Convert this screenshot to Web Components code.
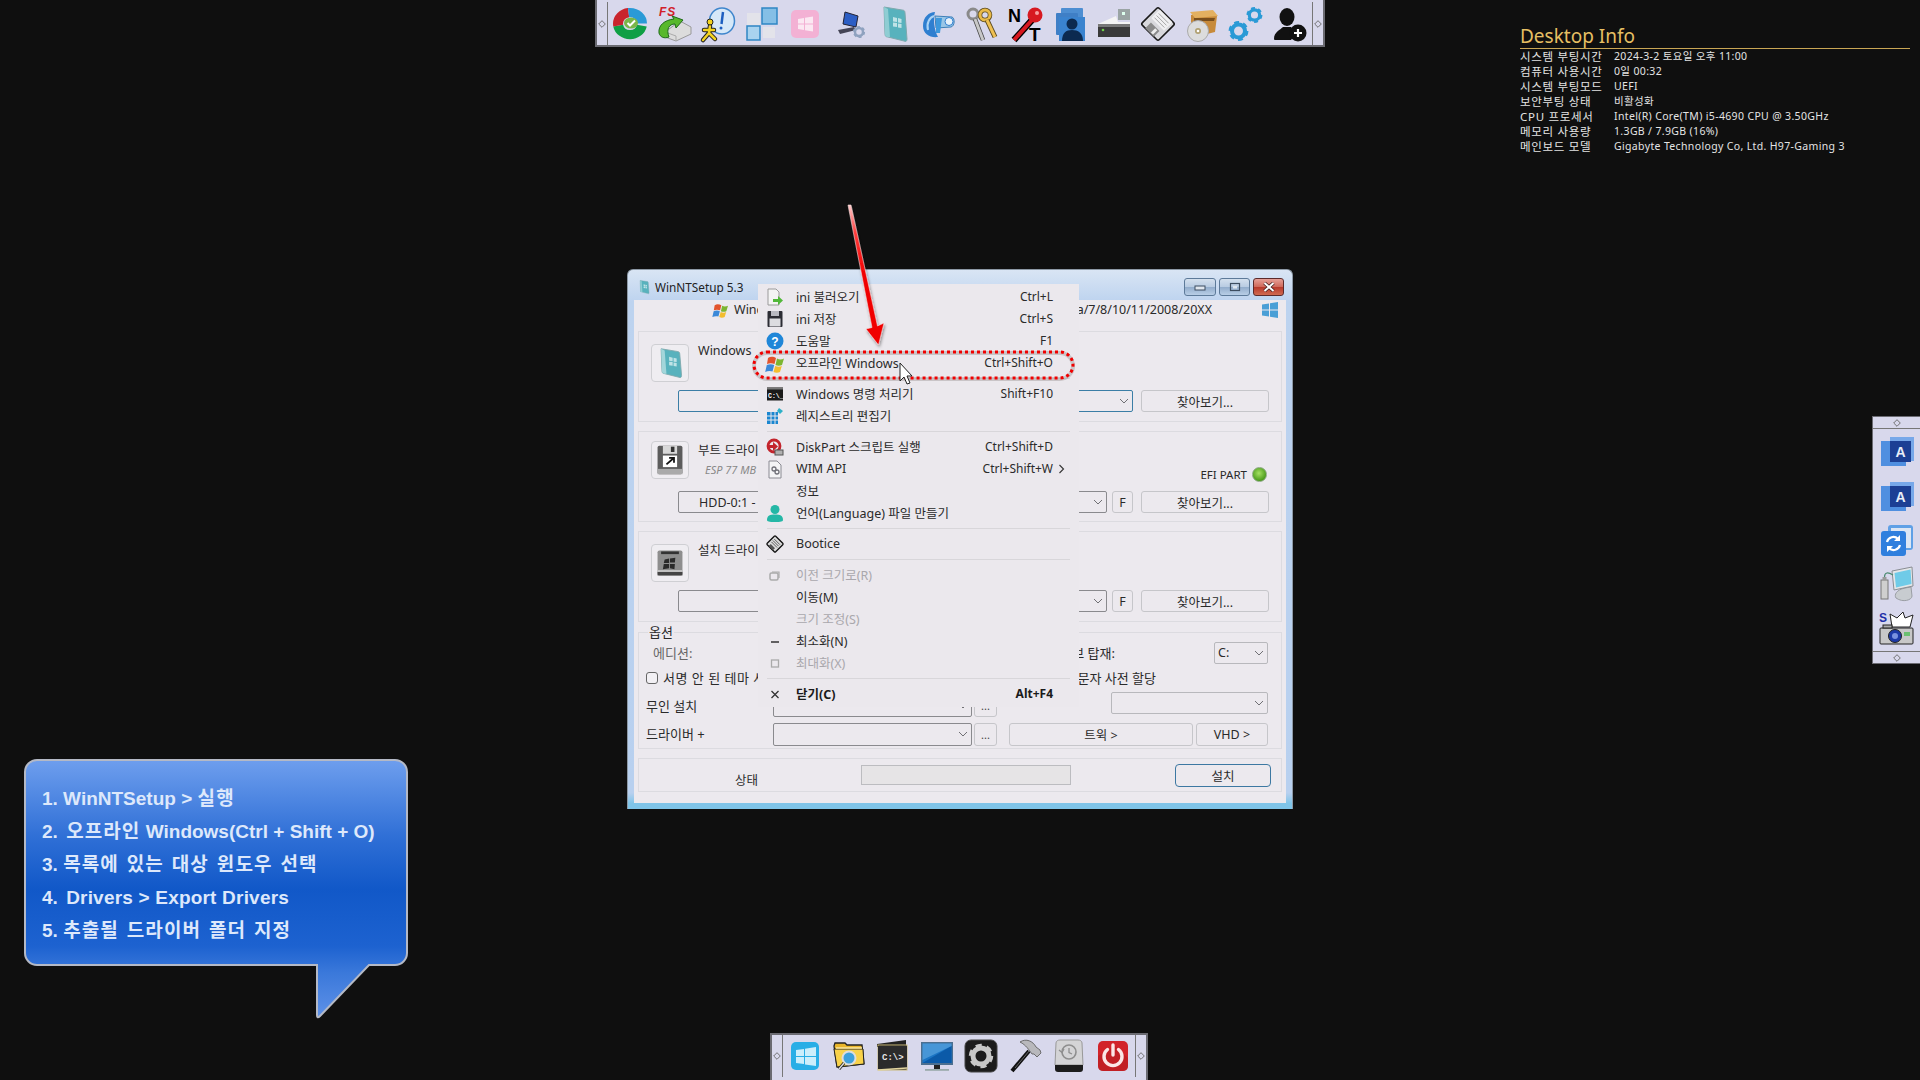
<!DOCTYPE html>
<html lang="ko">
<head>
<meta charset="utf-8">
<title>WinNTSetup</title>
<style>
  html, body { margin: 0; padding: 0; background: #0f0f0f; }
  body { width: 1920px; height: 1080px; position: relative; overflow: hidden; font-family: "Noto Sans", "Noto Sans CJK KR", sans-serif; color: #222; }
  #topDock { left: 595px; top: 0; }
  #bottomDock { left: 770px; top: 1033px; }
  #sideDock { left: 1872px; top: 416px; }
  #info { left: 1520px; top: 23px; }
  #note { left: 22px; top: 757px; }
  #setup { left: 627px; top: 269px; }
  .ko { letter-spacing: 1.1px; word-spacing: 1.500px; }
  .gap { margin-left: 3px; }
</style>
</head>
<body>
<dock-bar id="topDock" cell="44">
  <app-icon name="partition"></app-icon><app-icon name="fs"></app-icon><app-icon name="aim"></app-icon><app-icon name="squares"></app-icon>
  <app-icon name="pinkwin"></app-icon><app-icon name="netpc"></app-icon><app-icon name="book"></app-icon><app-icon name="tube"></app-icon>
  <app-icon name="keys"></app-icon><app-icon name="ntkey"></app-icon><app-icon name="people"></app-icon><app-icon name="drive"></app-icon>
  <app-icon name="floppy"></app-icon><app-icon name="box"></app-icon><app-icon name="gears"></app-icon><app-icon name="useradd"></app-icon>
</dock-bar>

<desktop-info id="info"></desktop-info>

<setup-window id="setup">
  <drive-group icon="bookbox" label="Windows" focus></drive-group>
  <drive-group icon="bootdisk" label="부트 드라이브" sub="ESP 77 MB" combo="HDD-0:1 -" efi fbtn style="--top:9px;--head:50px;--txt:3px"></drive-group>
  <drive-group icon="windisk" label="설치 드라이브" fbtn></drive-group>
  <options-group></options-group>
  <status-group></status-group>
  <ctx-menu slot="menu">
    <menu-item icon="m-open" label="ini 불러오기" keys="Ctrl+L"></menu-item>
    <menu-item icon="m-save" label="ini 저장" keys="Ctrl+S"></menu-item>
    <menu-item icon="m-help" label="도움말" keys="F1"></menu-item>
    <menu-item icon="m-flag" label="오프라인 Windows" keys="Ctrl+Shift+O"></menu-item>
    <menu-sep></menu-sep>
    <menu-item icon="m-cmd" label="Windows 명령 처리기" keys="Shift+F10"></menu-item>
    <menu-item icon="m-reg" label="레지스트리 편집기"></menu-item>
    <menu-sep></menu-sep>
    <menu-item icon="m-disk" label="DiskPart 스크립트 실행" keys="Ctrl+Shift+D"></menu-item>
    <menu-item icon="m-wim" label="WIM API" keys="Ctrl+Shift+W" more></menu-item>
    <menu-item label="정보"></menu-item>
    <menu-item icon="m-user" label="언어(Language) 파일 만들기"></menu-item>
    <menu-sep></menu-sep>
    <menu-item icon="m-boot" label="Bootice"></menu-item>
    <menu-sep></menu-sep>
    <menu-item icon="m-restore" label="이전 크기로(R)" disabled></menu-item>
    <menu-item label="이동(M)"></menu-item>
    <menu-item label="크기 조정(S)" disabled></menu-item>
    <menu-item icon="m-min" label="최소화(N)"></menu-item>
    <menu-item icon="m-max" label="최대화(X)" disabled></menu-item>
    <menu-sep></menu-sep>
    <menu-item icon="m-close" label="닫기(C)" keys="Alt+F4" bold></menu-item>
  </ctx-menu>
</setup-window>

<mark-up></mark-up>

<side-dock id="sideDock">
  <app-icon name="acro1"></app-icon><app-icon name="acro2"></app-icon><app-icon name="sync"></app-icon><app-icon name="usbpc"></app-icon><app-icon name="snap"></app-icon>
</side-dock>

<note-bubble id="note">
  <div>1. WinNTSetup &gt; <span class="ko">실행</span></div>
  <div>2. <span class="ko gap">오프라인</span> Windows(Ctrl + Shift + O)</div>
  <div>3. <span class="ko">목록에 있는 대상 윈도우 선택</span></div>
  <div>4. <span class="gap" style="letter-spacing:.2px">Drivers &gt; Export Drivers</span></div>
  <div>5. <span class="ko">추출될 드라이버 폴더 지정</span></div>
</note-bubble>

<dock-bar id="bottomDock" cell="44">
  <app-icon name="wintile"></app-icon><app-icon name="folder"></app-icon><app-icon name="console"></app-icon><app-icon name="monitor"></app-icon>
  <app-icon name="gearbox"></app-icon><app-icon name="hammer"></app-icon><app-icon name="timedrive"></app-icon><app-icon name="power"></app-icon>
</dock-bar>

<script>
const gear = (x, y, r, c) => `<circle cx="${x}" cy="${y}" r="${r}" fill="none" stroke="${c}" stroke-width="${r * 0.62}"/><circle cx="${x}" cy="${y}" r="${r * 1.32}" fill="none" stroke="${c}" stroke-width="${r * 0.42}" stroke-dasharray="${r * 0.75} ${r * 0.63}"/>`;
const winPanes = 'M8 11 16 10V17H8ZM17 9.8 28 8V17H17ZM8 18H16V25L8 24ZM17 18H28V27L17 25.5Z';
const xpFlag = `<path d="M2 4C5 2 8 3 10 4L8.500 10C6 9 3.500 9 1 10Z" fill="#e2542c"/><path d="M11 4.500C13.500 6 16 5.500 18 4.500L16 11C14 12 11.500 12 9.500 11Z" fill="#7cb531"/><path d="M.8 11C3.500 10 6 10 8.200 11L6.500 17.500C4 16.500 1.500 17 -.8 18Z" fill="#3b89d8"/><path d="M9.200 12C11.500 13 14 13 15.800 12L14 18C12 19 9.500 19 7.500 18Z" fill="#f3bd2e"/>`;

const ICONS = {
  partition: `<g transform="translate(0 1) scale(1 .92)" fill="none" stroke-width="10"><circle cx="18" cy="18" r="12" pathLength="100" stroke="#0f9f45" stroke-dasharray="44 100" stroke-dashoffset="-3"/><circle cx="18" cy="18" r="12" pathLength="100" stroke="#c9242d" stroke-dasharray="26 100" stroke-dashoffset="-47"/><circle cx="18" cy="18" r="12" pathLength="100" stroke="#2a9ad6" stroke-dasharray="30 100" stroke-dashoffset="-73"/></g><ellipse cx="19" cy="17" rx="7" ry="5.500" fill="#7ab648"/><path d="M15.500 17 18 19.500 23 14.500" fill="none" stroke="#fff" stroke-width="2"/>`,
  fs: `<text x="3" y="10" font-family="Liberation Sans" font-weight="700" font-style="italic" font-size="12" fill="#d2202a" letter-spacing="1">FS</text><path d="M9 26 24 15 35 21V28L20 35 9 31Z" fill="#dcdcdc" stroke="#999"/><path d="M9 26 20 30V35" fill="none" stroke="#aaa"/><path d="M3 27C2 19 9 14 18 13L16 10 27 14 20 22 19 18C13 18 10 23 13 31 8 33 4 31 3 27Z" fill="#58b82c" stroke="#1d6a18"/>`,
  aim: `<ellipse cx="22" cy="15" rx="12.500" ry="13" fill="#d6e8f8" stroke="#3f86cc" stroke-width="1.500"/><path d="M23 6 21.500 18" stroke="#1d5fc0" stroke-width="2.500"/><circle cx="21" cy="22" r="1.500" fill="#1d5fc0"/><g fill="none" stroke="#222" stroke-width="4.500" stroke-linecap="round"><path d="M10 20 9 27 3 34M9 27 15 33M4 24 14 24"/></g><g fill="none" stroke="#f3d320" stroke-width="2.500" stroke-linecap="round"><path d="M10 20 9 27 3 34M9 27 15 33M4 24 14 24"/></g><circle cx="10" cy="16" r="3" fill="#f3d320" stroke="#222"/>`,
  squares: `<rect x="3" y="7" width="13" height="12" fill="#e3e3ea"/><rect x="18" y="2" width="15" height="16" fill="#85bfe6" stroke="#2f86c4" stroke-width="1.500"/><rect x="3" y="20" width="13" height="14" fill="#a9d3ef" stroke="#2f86c4" stroke-width="1.500"/><rect x="19" y="21" width="12" height="11" fill="#e3e3ea"/>`,
  pinkwin: `<rect x="3" y="4" width="28" height="28" rx="5" fill="#f3b1d4"/><path d="M10 13 16 12V17.500H10ZM17 11.800 25 10.500V17.500H17ZM10 18.500H16V24L10 23ZM17 18.500H25V25.500L17 24.200Z" fill="#fbe8f2"/>`,
  netpc: `<path d="M13 6 26 10 24 21 11 18Z" fill="#2c5ec4" stroke="#223"/><path d="M6 24 22 21 24 24 8 28Z" fill="#445"/>${gear(27, 26, 4, '#8fa2bf')}`,
  book: `<path d="M8 1 26 4C28 4 29 5 29 7L31 33C31 35 30 36 28 35L12 31C10 31 9 30 9 28Z" fill="#58b2bd" stroke="#7fa9ad"/><path d="M8 1 12 3 14 31 12 31C10 31 9 30 9 28Z" fill="#8fcdd3"/><path d="M17 11 21 12V16L17 15.500ZM22 12 25.500 13V17L22 16.500ZM17 16.500 21 17V21L17 20.500ZM22 17.500 25.500 18V22L22 21.500Z" fill="#bfe3e6"/>`,
  tube: `<path d="M3 20C3 11 9 6 15 6 13 12 14 24 18 31 10 32 3 28 3 20Z" fill="#2f7fd0"/><path d="M8 24C6 17 10 11 14 10" stroke="#aad4f5" stroke-width="2" fill="none"/><path d="M15 10 32 11C35 12 35 20 31 21L16 22Z" fill="#9ac6e6" stroke="#3f80b8"/><ellipse cx="29" cy="15.500" rx="4" ry="4" fill="#e8f2fa" stroke="#2f7fd0"/><path d="M16 12 22 12 20 27 16 27Z" fill="#3d98dc"/>`,
  keys: `<g fill="none"><circle cx="9" cy="8" r="5" stroke="#8a8a8a" stroke-width="3"/><path d="M11 13 19 34" stroke="#444" stroke-width="4.500"/><path d="M11 13 19 34" stroke="#c8c8c8" stroke-width="3"/><circle cx="21" cy="9" r="5" stroke="#5a4a20" stroke-width="4.500"/><circle cx="21" cy="9" r="5" stroke="#e8b948" stroke-width="3"/><path d="M23 14 31 31" stroke="#5a4a20" stroke-width="5"/><path d="M23 14 31 31" stroke="#efc052" stroke-width="3"/></g>`,
  ntkey: `<text x="0" y="16" font-family="Liberation Sans" font-weight="700" font-size="18" fill="#000">N</text><text x="21" y="35" font-family="Liberation Sans" font-weight="700" font-size="19" fill="#000">T</text><path d="M24 14 6 34" stroke="#000" stroke-width="6.500"/><path d="M24 14 6 34" stroke="#d71920" stroke-width="4"/><circle cx="27" cy="9" r="7.500" fill="#d71920"/><circle cx="29" cy="7" r="2" fill="#f6a0a0"/>`,
  people: `<rect x="9" y="2" width="22" height="22" rx="1" fill="#4d8ed2"/><rect x="4" y="7" width="22" height="22" rx="1" fill="#3f7fc6"/><rect x="7" y="11" width="26" height="24" fill="#3a83cf"/><circle cx="20" cy="18" r="5.500" fill="#0c2a50"/><path d="M10 35C10 27 14 24 20 24S31 27 31 35Z" fill="#0c2a50"/>`,
  drive: `<rect x="22" y="3" width="12" height="11" fill="#9aa4a4"/><rect x="26" y="6" width="3" height="3" fill="#dfe"/><path d="M2 18 20 10 22 16 34 16V18Z" fill="#f4f4f4"/><rect x="2" y="18" width="32" height="13" fill="#3a3a3a"/><rect x="2" y="18" width="32" height="3" fill="#787878"/><circle cx="7" cy="24" r="1.300" fill="#6fd04a"/>`,
  floppy: `<g transform="rotate(45 18 18)"><rect x="6" y="6" width="24" height="24" rx="2" fill="#d8d8dc" stroke="#1a1a1a" stroke-width="1.600"/><rect x="9" y="6.500" width="18" height="12" fill="#f0f0f2"/><path d="M11 10H25M11 13H25M11 16H25" stroke="#999" stroke-width=".8"/><rect x="12" y="22" width="12" height="8" fill="#8a8a8a"/><rect x="19" y="23" width="3" height="6" fill="#eee"/></g>`,
  box: `<path d="M7 9 27 5 33 10 31 26 15 30 7 24Z" fill="#c78a3a"/><path d="M6 6 29 4 34 10 11 12Z" fill="#e3b060"/><path d="M10 12H31L30 15H10Z" fill="#7a4f1c"/><circle cx="14" cy="25" r="10.500" fill="#dcdcdc" stroke="#aaa"/><circle cx="14" cy="25" r="3" fill="#b0a070"/><circle cx="14" cy="25" r="1.300" fill="#fff"/>`,
  gears: gear(10.500, 25, 6.500, '#2a9ad6') + gear(26.500, 9, 5.200, '#2a9ad6'),
  useradd: `<ellipse cx="15" cy="11" rx="7.500" ry="9" fill="#111"/><path d="M2 33C2 26 8 24 11 21H19C21 24 24 25 25 26L19 34H4C3 34 2 34 2 33Z" fill="#111"/><circle cx="26" cy="27" r="8.500" fill="#111"/><path d="M22 27H30M26 23V31" stroke="#fff" stroke-width="2.200"/>`,
  wintile: `<rect x="4" y="4" width="28" height="28" rx="5" fill="#29aee6"/><path d="${winPanes}" fill="#cdeefb" transform="translate(1 1)"/>`,
  folder: `<path d="M3 8 4 5H14L16 7H31L33 26 6 29Z" fill="#e9b52a" stroke="#222" stroke-width="1.300"/><path d="M3 11H32L33 26 6 29Z" fill="#f8d24a" stroke="#222"/><path d="M5 10H31" stroke="#fbe9a0" stroke-width="1.500"/><circle cx="18" cy="20" r="6.500" fill="#3da0dc" stroke="#ddd" stroke-width="2"/><path d="M13 25 8 31" stroke="#222" stroke-width="3"/><path d="M13 25 8 31" stroke="#ddd" stroke-width="1.400"/>`,
  console: `<path d="M2 6 31 2V7L2 9Z" fill="#222"/><rect x="3" y="7" width="29" height="25" fill="#1a1a1a" stroke="#c8b878" stroke-width="1"/><rect x="3" y="8" width="29" height="23" fill="#2b2b2b"/><text x="7" y="22" font-family="Liberation Mono" font-size="9" fill="#e8e8e8" font-weight="700">C:\\&gt;</text><path d="M3 32 32 30" stroke="#e3d6a0" stroke-width="1.500"/>`,
  monitor: `<rect x="2" y="4" width="32" height="23" fill="#4c6f90"/><path d="M3.500 5.500H32.500V25H3.500Z" fill="#1a74c4"/><path d="M3.500 25 32.500 8V25Z" fill="#0b5aa8"/><path d="M3.500 5.500H32.500V8L3.500 22Z" fill="#6db2e8" opacity=".55"/><rect x="15" y="27" width="6" height="4" fill="#222"/><rect x="6" y="31" width="24" height="1.800" fill="#9aa"/>`,
  gearbox: `<rect x="2" y="2" width="32" height="32" rx="6" fill="#1c1c1c" stroke="#444"/>${gear(18, 18, 8, '#c8c8c8')}`,
  hammer: `<path d="M22 13 5 33" stroke="#111" stroke-width="4"/><path d="M22 13 8 30" stroke="#666" stroke-width="1"/><path d="M13 4C19 0 26 3 29 9L33 12 34 15 30 19 27 16 25 16C22 12 19 7 13 4Z" fill="#b8b8bc" stroke="#555" stroke-width=".8"/>`,
  timedrive: `<path d="M5 5C5 3 7 2 9 2H27C29 2 31 3 31 5L32 27H4Z" fill="#d4d4d6" stroke="#999"/><circle cx="18" cy="14" r="7" fill="none" stroke="#8e8e8e" stroke-width="1.600"/><path d="M18 10V14.500L21 16M8 12 11 14.500 13 11" fill="none" stroke="#8e8e8e" stroke-width="1.300"/><path d="M4 27H32V31C32 33 31 34 29 34H7C5 34 4 33 4 31Z" fill="#1c1c1c"/>`,
  power: `<rect x="3" y="3" width="30" height="30" rx="5" fill="#d2232a"/><path d="M3 18V28C3 31 5 33 8 33H28C31 33 33 31 33 28V20L20 8Z" fill="#b71c22" opacity=".6"/><path d="M12.500 11.500A9 9 0 1 0 23.500 11.500" fill="none" stroke="#fbe6e6" stroke-width="3.400" stroke-linecap="round"/><path d="M18 7V17" stroke="#fbe6e6" stroke-width="3.400" stroke-linecap="round"/>`,
  acro1: `<rect x="2" y="7" width="25" height="25" fill="#4f8fe0"/><rect x="11" y="3" width="24" height="24" fill="#5f9ce8" opacity=".8"/><rect x="11" y="7" width="21" height="21" fill="#1c3f94"/><text x="21.500" y="23" text-anchor="middle" font-family="Liberation Sans" font-weight="700" font-size="14" fill="#e8eef8">A</text>`,
  acro2: `<rect x="2" y="8" width="25" height="25" fill="#4f8fe0"/><rect x="11" y="4" width="24" height="24" fill="#5f9ce8" opacity=".8"/><rect x="11" y="8" width="21" height="21" fill="#1c3f94"/><text x="21.500" y="24" text-anchor="middle" font-family="Liberation Sans" font-weight="700" font-size="14" fill="#e8eef8">A</text>`,
  sync: `<rect x="9" y="3" width="25" height="25" rx="3" fill="#5fa0e6"/><rect x="12" y="6" width="20" height="20" fill="#dce6f4"/><rect x="2" y="9" width="25" height="25" rx="3" fill="#2f7fde"/><path d="M8 20A6.500 6.500 0 0 1 19 17M21 23A6.500 6.500 0 0 1 10 26" fill="none" stroke="#fff" stroke-width="2.200"/><path d="M21 13V19H15ZM8 30V24H14Z" fill="#fff"/>`,
  usbpc: `<path d="M26 22C17 24 15 29 17 32 24 37 33 34 33 30L32 21Z" fill="#c8ccd0" stroke="#9a9ea4"/><path d="M13 5 33 1 34 20 15 24Z" fill="#e4e6e8" stroke="#8a8e94"/><path d="M15.500 7 31.500 3.500 32.500 18 17 21.500Z" fill="#6fcbe8"/><rect x="2" y="14" width="7" height="19" fill="#cfcfcf" stroke="#777"/><rect x="3.500" y="11" width="4" height="3" fill="#999"/><path d="M5.500 11C5.500 6 9 6 14 9" fill="none" stroke="#4a8a70" stroke-width="1.200"/>`,
  snap: `<text x="0" y="12" font-family="Liberation Sans" font-weight="700" font-size="12" fill="#1d2fa8">S</text><path d="M13 17 11 4 18 8 24 2 26 8 34 5 31 17Z" fill="#fff" stroke="#222"/><rect x="1" y="18" width="33" height="16" rx="1" fill="#c8c8c8" stroke="#222"/><rect x="4" y="15" width="9" height="3" fill="#aaa" stroke="#222"/><circle cx="16" cy="26" r="6.500" fill="#1d3aa8" stroke="#222"/><circle cx="16" cy="26" r="3" fill="#7a92e0"/><rect x="25" y="22" width="6" height="4" fill="#6cc070"/>`,
  bookbox: `<path d="M8 2 26 5C28 5 29 6 29 8L31 32C31 34 30 35 28 34L12 30C10 30 9 29 9 27Z" fill="#58b2bd" stroke="#7fa9ad"/><path d="M8 2 12 4 14 30 12 30C10 30 9 29 9 27Z" fill="#a3d6da"/><path d="M17 11 21 12V16L17 15.500ZM22 12 25.500 13V17L22 16.500ZM17 16.500 21 17V21L17 20.500ZM22 17.500 25.500 18V22L22 21.500Z" fill="#bfe3e6"/>`,
  bootdisk: `<rect x="4" y="2" width="28" height="32" rx="2" fill="#5c5c5c"/><rect x="10" y="2" width="16" height="9" fill="#d8d8d8"/><rect x="19" y="3" width="4" height="6" fill="#333"/><rect x="10" y="13" width="16" height="13" fill="#fff"/><path d="M14 23 22 16M17 15.500H22.500V21" fill="none" stroke="#111" stroke-width="2"/><rect x="4" y="28" width="28" height="6" fill="#aaa"/>`,
  windisk: `<rect x="4" y="4" width="28" height="28" rx="2" fill="#8e8e8e"/><rect x="8" y="5" width="20" height="3" fill="#333"/><path d="M12 14 17 13V18H11ZM18 12.800 24 12 23.500 17.500H18ZM11 19H17V24L10 25ZM18 19H23.500L23 25 18 24Z" fill="#2a2a2a"/><rect x="4" y="28" width="28" height="4" fill="#444"/><rect x="4" y="26" width="28" height="2" fill="#c8c8c8"/>`,
  'm-open': `<path d="M2 1H10L13 4V17H2Z" fill="#f4f4f4" stroke="#9a9a9a"/><path d="M7 11H12V8L17 12.500 12 17V14H7Z" fill="#52b83a"/>`,
  'm-save': `<rect x="1.500" y="1" width="15" height="16" rx="1" fill="#2c2c34"/><rect x="5" y="1" width="8" height="5" fill="#b8b8c0"/><rect x="3.500" y="8.500" width="11" height="8" fill="#dcdce0"/>`,
  'm-help': `<circle cx="9" cy="9" r="8.500" fill="#1f86d8"/><text x="9" y="13.500" text-anchor="middle" font-family="Liberation Sans" font-weight="700" font-size="12" fill="#fff">?</text>`,
  'm-flag': xpFlag,
  'm-cmd': `<rect x="1" y="2.500" width="16" height="13" fill="#1a1a1a"/><rect x="1" y="2.500" width="16" height="2" fill="#777"/><text x="2" y="13" font-family="Liberation Mono" font-weight="700" font-size="6.500" fill="#fff">C:\\_</text>`,
  'm-reg': `<path d="M1 5H12V17H1Z" fill="#1a86d0"/><path d="M1 9H12M1 13H12M5 5V17M9 5V17" stroke="#e8e6ea" stroke-width="1"/><path d="M13 1 17 4 14 7 11 4Z" fill="#2db0c8"/>`,
  'm-disk': `<circle cx="8" cy="8" r="6" fill="none" stroke="#c3242c" stroke-width="2.800"/><path d="M1 7H7V4L12 8.500 7 13V10H1Z" fill="#c3242c"/><rect x="9" y="12" width="8" height="5" fill="#b0b0b0" stroke="#555"/>`,
  'm-wim': `<path d="M3 1H11L15 5V18H3Z" fill="#f4f4f6" stroke="#8a8a92"/><circle cx="8" cy="9" r="2" fill="none" stroke="#707078" stroke-width="1.300"/><circle cx="11" cy="12" r="2" fill="none" stroke="#707078" stroke-width="1.300"/>`,
  'm-user': `<circle cx="9" cy="5.500" r="4.500" fill="#25b7a6"/><path d="M1 16C1 11.500 4 10.500 9 10.500S17 11.500 17 16C17 17.500 15 18 9 18S1 17.500 1 16Z" fill="#25b7a6"/>`,
  'm-boot': `<g transform="rotate(45 9 9)"><rect x="3" y="3" width="12" height="12" rx="1" fill="#dcdcdc" stroke="#111" stroke-width="1.300"/><path d="M5 6H13M5 8H13M5 10H13" stroke="#444" stroke-width=".8"/><rect x="6" y="12" width="6" height="3" fill="#555"/></g>`,
  'm-restore': `<rect x="4" y="7" width="8" height="7" rx="1.500" fill="none" stroke="#aaa" stroke-width="1.500"/><path d="M6 6H13V12" fill="none" stroke="#aaa" stroke-width="1.200"/>`,
  'm-min': `<path d="M5 10H13" stroke="#333" stroke-width="1.500"/>`,
  'm-max': `<rect x="5.500" y="6" width="7" height="7" fill="none" stroke="#aaa" stroke-width="1.300"/>`,
  'm-close': `<path d="M5.500 6 12.500 13M12.500 6 5.500 13" stroke="#333" stroke-width="1.300"/>`,
};

class AppIcon extends HTMLElement {
  connectedCallback() {
    const small = this.getAttribute('name').startsWith('m-');
    const box = small ? 18 : 36;
    const size = this.getAttribute('size') || box;
    this.attachShadow({ mode: 'open' }).innerHTML = `
      <style>:host{display:block;width:${size}px;height:${size}px;flex:none} svg{display:block;overflow:visible}</style>
      <svg width="${size}" height="${size}" viewBox="0 0 ${box} ${box}">${ICONS[this.getAttribute('name')]}</svg>`;
  }
}

const DIAMOND = `<svg width="8" height="8" viewBox="0 0 8 8"><path d="M4 .7 7.300 4 4 7.300 .7 4Z" fill="none" stroke="#666" stroke-width=".9"/></svg>`;

class DockBar extends HTMLElement {
  connectedCallback() {
    const cell = this.getAttribute('cell');
    this.attachShadow({ mode: 'open' }).innerHTML = `
      <style>
        :host{position:absolute;display:flex;align-items:stretch;background:#d8d8ec;border:2px solid #6b6b72;box-sizing:border-box;height:47px}
        :host(#topDock){border-top:0;padding-top:2px}
        :host(#bottomDock){border-bottom:0;padding-bottom:3px}
        .grip{width:10px;display:flex;align-items:center;justify-content:center;flex:none}
        .left{border-right:1px solid #777}
        .right{border-left:1px solid #777}
        .row{display:flex;align-items:center}
        ::slotted(app-icon){margin:0 ${(cell - 36) / 2}px}
      </style>
      <div class="grip left">${DIAMOND}</div>
      <div class="row"><slot></slot></div>
      <div class="grip right">${DIAMOND}</div>`;
  }
}

class SideDock extends HTMLElement {
  connectedCallback() {
    this.attachShadow({ mode: 'open' }).innerHTML = `
      <style>
        :host{position:absolute;display:flex;flex-direction:column;width:48px;height:248px;box-sizing:border-box;background:#d8d8ec;border:1px solid #6b6b72;border-right:0}
        .grip{height:11px;display:flex;align-items:center;justify-content:center;flex:none}
        .col{flex:1;display:flex;flex-direction:column;align-items:center;gap:8px;padding:5px 0 0;border-top:1px solid #777;border-bottom:1px solid #777}
      </style>
      <div class="grip">${DIAMOND}</div>
      <div class="col"><slot></slot></div>
      <div class="grip">${DIAMOND}</div>`;
  }
}

class DesktopInfo extends HTMLElement {
  connectedCallback() {
    const rows = [
      ['시스템 부팅시간', '2024-3-2 토요일 오후 11:00'],
      ['컴퓨터 사용시간', '0일 00:32'],
      ['시스템 부팅모드', 'UEFI'],
      ['보안부팅 상태', '비활성화'],
      ['CPU 프로세서', 'Intel(R) Core(TM) i5-4690 CPU @ 3.50GHz'],
      ['메모리 사용량', '1.3GB / 7.9GB (16%)'],
      ['메인보드 모델', 'Gigabyte Technology Co, Ltd. H97-Gaming 3'],
    ];
    this.attachShadow({ mode: 'open' }).innerHTML = `
      <style>
        :host{position:absolute;display:block;width:390px;color:#e4e4e4}
        h1{margin:0;height:25px;line-height:26px;font-size:19px;font-weight:400;color:#e6bf63;border-bottom:1px solid #c9a654}
        .rows{display:grid;grid-template-columns:94px 1fr;grid-auto-rows:15px;line-height:15px;font-size:10.500px;letter-spacing:.35px}
        span{white-space:nowrap}
        .k{font-size:11.500px;letter-spacing:.7px}
      </style>
      <h1>Desktop Info</h1>
      <div class="rows">${rows.map(r => `<span class="k">${r[0]}</span><span>${r[1]}</span>`).join('')}</div>`;
  }
}

class NoteBubble extends HTMLElement {
  connectedCallback() {
    this.attachShadow({ mode: 'open' }).innerHTML = `
      <style>
        :host{position:absolute;display:block;width:388px;height:264px;box-sizing:border-box;padding:25px 0 0 20px;font:700 19px/33px "Liberation Sans","Noto Sans CJK KR",sans-serif;color:#dde8fb}
        svg{position:absolute;left:0;top:0;z-index:0}
        .txt{position:relative}
        ::slotted(div){white-space:nowrap}
      </style>
      <svg width="388" height="264" viewBox="0 0 388 264">
        <defs><linearGradient id="fill" gradientUnits="userSpaceOnUse" x1="0" y1="2" x2="0" y2="262">
          <stop offset="0" stop-color="#6f9fee"/><stop offset=".3" stop-color="#2f6fd6"/><stop offset=".5" stop-color="#1158c8"/><stop offset=".72" stop-color="#1d62d0"/><stop offset=".82" stop-color="#3a78da"/><stop offset="1" stop-color="#5f92e8"/>
        </linearGradient></defs>
        <path d="M15 3H373a12 12 0 0 1 12 12V196a12 12 0 0 1-12 12H347L298 259Q295 262 295 258V208H15a12 12 0 0 1-12-12V15a12 12 0 0 1 12-12Z" fill="url(#fill)" stroke="#b4b9c6" stroke-width="2"/>
      </svg>
      <div class="txt"><slot></slot></div>`;
  }
}

class SetupWindow extends HTMLElement {
  connectedCallback() {
    this.attachShadow({ mode: 'open' }).innerHTML = `
      <style>
        :host{position:absolute;display:flex;flex-direction:column;width:666px;height:540px;box-sizing:border-box;padding:0 6px 6px;border-radius:6px 6px 0 0;border:1px solid #8d99a6;border-width:1px 1px 0 1px;background:linear-gradient(#d9e5f4 0,#bdd3ef 32px,#b8d0ef 97%,#7fc4e8 99%,#7fc4e8 100%);font-size:12.500px;color:#2a2a2a}
        .title{height:30px;flex:none;display:flex;align-items:center;box-sizing:border-box;padding-top:4px}
        .title span{margin-left:4px;font-size:11.800px;color:#222}
        .title app-icon{margin-left:3px}
        .caps{margin-left:auto;display:flex;gap:3px;align-self:flex-start;margin-top:4px;margin-right:2px}
        .cap{width:31px;height:18px;box-sizing:border-box;border:1px solid #5d7a99;border-radius:3px;background:linear-gradient(#d4e0ee 0,#b8cbe2 50%,#93adcc 52%,#b8cee6);display:flex;align-items:center;justify-content:center}
        .cap.wide{width:32px}
        .cap.close{border-color:#5c2b2b;background:linear-gradient(#e6a097 0,#cf6a5c 48%,#b83a2c 52%,#d06a50)}
        .client{flex:1;background:#ece9ee;display:flex;flex-direction:column;padding:0 4px;min-height:0}
        .top{height:31px;flex:none;display:flex;align-items:center;padding:0 9px 12px 75px;font-size:12.500px;box-sizing:border-box}
        .top .lead{display:flex;align-items:center;gap:6px}
        .top .tail{margin-left:auto;margin-right:50px}
        .stack{display:flex;flex-direction:column;gap:9.500px}
        .menuwrap{position:absolute;left:130px;top:14px}
      </style>
      <div class="title">
        <app-icon name="book" size="14"></app-icon><span>WinNTSetup 5.3</span>
        <div class="caps">
          <div class="cap wide"><svg width="12" height="8"><rect x="1" y="3" width="10" height="4" fill="#dfe6ee" stroke="#3d4d60"/></svg></div>
          <div class="cap"><svg width="12" height="10"><rect x="1.500" y="1.500" width="9" height="7" fill="none" stroke="#3d4d60" stroke-width="1.200"/><rect x="4" y="4" width="4" height="2.500" fill="#dfe6ee"/></svg></div>
          <div class="cap close"><svg width="14" height="10"><path d="M2.500 1 11.500 9M11.500 1 2.500 9" stroke="#3a1a1a" stroke-width="3.400"/><path d="M2.500 1 11.500 9M11.500 1 2.500 9" stroke="#fff" stroke-width="2"/></svg></div>
        </div>
      </div>
      <div class="client">
        <div class="top">
          <span class="lead"><app-icon name="m-flag" size="15"></app-icon>Windows</span>
          <span class="tail">Vista/7/8/10/11/2008/20XX</span>
          <svg width="16" height="16" viewBox="0 0 16 16" style="flex:none;margin-right:-5px"><path d="M0 2.500 7 1.500V7.500H0ZM8 1.300 16 0V7.500H8ZM0 8.500H7V14.500L0 13.500ZM8 8.500H16V16L8 14.700Z" fill="#4a9fd6"/></svg>
        </div>
        <div class="stack"><slot></slot></div>
      </div>
      <div class="menuwrap"><slot name="menu"></slot></div>`;
  }
}

class ComboBox extends HTMLElement {
  connectedCallback() {
    this.attachShadow({ mode: 'open' }).innerHTML = `
      <style>
        :host{display:flex;align-items:center;height:22px;box-sizing:border-box;border:1px solid #8a8a8e;border-radius:2px;background:#ece9ee;font-size:12.500px;color:#2a2a2a;padding:0 3px 0 var(--indent,8px);flex:none}
        :host([focus]){border-color:#3b7ea6}
        :host([soft]){border-color:#b8b8bc}
        .t{flex:1;white-space:nowrap;overflow:hidden}
      </style>
      <span class="t"><slot></slot></span>
      <svg width="10" height="6" viewBox="0 0 10 6"><path d="M1 1 5 5 9 1" fill="none" stroke="#707074"/></svg>`;
  }
}

class PushBtn extends HTMLElement {
  connectedCallback() {
    this.attachShadow({ mode: 'open' }).innerHTML = `
      <style>
        :host{display:flex;align-items:center;justify-content:center;height:22px;box-sizing:border-box;border:1px solid #c6c6ca;border-radius:3px;background:#ece9ee;font-size:12.500px;color:#2a2a2a;flex:none;white-space:nowrap}
        :host([primary]){border:1px solid #3d78a2;height:23px;border-radius:4px}
      </style><slot></slot>`;
  }
}

class DriveGroup extends HTMLElement {
  connectedCallback() {
    const a = n => this.getAttribute(n);
    const has = n => this.hasAttribute(n);
    this.attachShadow({ mode: 'open' }).innerHTML = `
      <style>
        :host{display:block;height:90.500px;box-sizing:border-box;border:1px solid #dcdbe0;padding:var(--top,12px) 12px 0}
        .head{display:flex;height:var(--head,46px);position:relative}
        .ico{width:38px;height:38px;box-sizing:border-box;border:1px solid #cfcfd3;border-radius:4px;display:flex;align-items:center;justify-content:center;background:#efedf1;flex:none}
        .txt{margin:var(--txt,0) 0 0 9px;font-size:12.500px;line-height:14px}
        .sub{font-style:italic;font-size:11px;color:#888;margin:5px 0 0 7px}
        .efi{position:absolute;right:0;top:26px;display:flex;align-items:center;gap:5px;font-size:11.500px;padding-right:2px}
        .dot{width:13px;height:13px;border-radius:50%;background:radial-gradient(circle at 45% 40%,#a5e062,#4c9c1c 70%,#2f6e14);border:1px solid #8aa880}
        .row{display:flex;gap:8px;margin-left:27px}
        combo-box{flex:1}
        .f{width:21px;margin-left:-3px}
        .browse{width:128px}
      </style>
      <div class="head">
        <div class="ico"><app-icon name="${a('icon')}" size="32"></app-icon></div>
        <div class="txt">${a('label')}${a('sub') ? `<div class="sub">${a('sub')}</div>` : ''}</div>
        ${has('efi') ? '<div class="efi">EFI PART<div class="dot"></div></div>' : ''}
      </div>
      <div class="row">
        <combo-box ${has('focus') ? 'focus' : ''} style="--indent:20px">${a('combo') || ''}</combo-box>
        ${has('fbtn') ? '<push-btn class="f">F</push-btn>' : ''}
        <push-btn class="browse">찾아보기...</push-btn>
      </div>`;
  }
}

class OptionsGroup extends HTMLElement {
  connectedCallback() {
    this.attachShadow({ mode: 'open' }).innerHTML = `
      <style>
        :host{display:block;position:relative;height:117px;box-sizing:border-box;border:1px solid #dcdbe0;padding:9px 13px 0 7px;font-size:13px;margin-top:.5px}
        .legend{position:absolute;left:9px;top:-8px;background:#ece9ee;padding:0 1px;line-height:15px}
        .row{display:flex;align-items:center}
        .a{height:22px}
        .b{height:22px;margin-top:3px}
        .c{height:25px;margin-top:3px;align-items:flex-start}
        .d{height:23px;margin-top:6px}
        .sp{flex:1}
        .lab{width:127px;flex:none}
        .c .lab{padding-top:4px}
        .d .lab{padding-bottom:2px}
        .check{width:12px;height:12px;box-sizing:border-box;border:1px solid #666;border-radius:3px;background:#f2f0f4;margin-right:5px;flex:none}
        .dim{color:#666;margin-left:7px}
        .wide{letter-spacing:.5px;white-space:nowrap}
        .c combo-box.left{width:199px;margin-top:3px}
        .more{width:23px;margin-left:2px;color:#444;font-size:11px}
        .c .more{margin-top:3px}
      </style>
      <div class="legend">옵션</div>
      <div class="row a"><span class="dim">에디션:</span><span class="sp"></span><span style="margin-right:99px;white-space:nowrap">드라이브 탑재:</span><combo-box soft style="width:54px;--indent:3px">C:</combo-box></div>
      <div class="row b"><span class="check"></span><span class="wide">서명 안 된 테마 사용</span><span class="sp"></span><span style="margin-right:112px;white-space:nowrap">드라이브 문자 사전 할당</span></div>
      <div class="row c"><span class="lab">무인 설치</span><combo-box class="left"></combo-box><push-btn class="more">...</push-btn><span class="sp"></span><combo-box soft style="width:157px"></combo-box></div>
      <div class="row d"><span class="lab">드라이버 +</span><combo-box style="width:199px;height:23px"></combo-box><push-btn class="more" style="height:23px">...</push-btn><push-btn style="width:184px;height:23px;margin-left:12px">트윅 &gt;</push-btn><push-btn style="width:72px;height:23px;margin-left:3px">VHD &gt;</push-btn></div>`;
  }
}

class StatusGroup extends HTMLElement {
  connectedCallback() {
    this.attachShadow({ mode: 'open' }).innerHTML = `
      <style>
        :host{display:flex;align-items:center;height:34px;box-sizing:border-box;border:1px solid #dcdbe0;font-size:12.500px}
        .lab{width:119px;text-align:right;padding-top:8px;flex:none;box-sizing:border-box}
        .bar{width:210px;height:20px;box-sizing:border-box;border:1px solid #bcbcc0;background:#e6e4e6;margin-left:103px;flex:none}
        push-btn{width:96px;margin-left:104px}
      </style>
      <span class="lab">상태</span><div class="bar"></div><push-btn primary>설치</push-btn>`;
  }
}

class CtxMenu extends HTMLElement {
  connectedCallback() {
    this.attachShadow({ mode: 'open' }).innerHTML = `
      <style>:host{display:block;width:321px;box-sizing:border-box;padding:2px 0;background:#ebe8ed;font-size:12.500px;color:#2a2a2a}</style>
      <slot></slot>`;
  }
}

class MenuItem extends HTMLElement {
  connectedCallback() {
    const a = n => this.getAttribute(n);
    const icon = a('icon');
    this.attachShadow({ mode: 'open' }).innerHTML = `
      <style>
        :host{display:flex;align-items:center;height:22px;box-sizing:border-box;padding:0 26px 1px 8px;white-space:nowrap;position:relative}
        :host([disabled]){color:#a9a7ac}
        :host([bold]){font-weight:700;color:#1a1a1a}
        .ic{width:18px;height:18px;flex:none;margin-right:12px}
        .k{margin-left:auto;font-size:12px}
        .more{position:absolute;right:14px;top:5px;width:7px}
      </style>
      <div class="ic">${icon ? `<app-icon name="${icon}"></app-icon>` : ''}</div>
      <span>${a('label')}</span>
      ${a('keys') ? `<span class="k">${a('keys')}</span>` : ''}
      ${this.hasAttribute('more') ? '<svg class="more" width="7" height="12" viewBox="0 0 7 12"><path d="M1.500 2 5.500 6 1.500 10" fill="none" stroke="#333" stroke-width="1.100"/></svg>' : ''}`;
  }
}

class MenuSep extends HTMLElement {
  connectedCallback() {
    this.attachShadow({ mode: 'open' }).innerHTML = `
      <style>:host{display:flex;align-items:center;height:9px;padding:0 9px}
      div{height:1px;flex:1;background:#d8d6da}</style><div></div>`;
  }
}

class MarkUp extends HTMLElement {
  connectedCallback() {
    this.attachShadow({ mode: 'open' }).innerHTML = `
      <style>:host{position:absolute;left:0;top:0;width:1920px;height:1080px;pointer-events:none} svg{display:block}</style>
      <svg width="1920" height="1080" viewBox="0 0 1920 1080">
        <defs>
          <filter id="soft" x="-20%" y="-20%" width="140%" height="140%"><feDropShadow dx="1" dy="2" stdDeviation="1.500" flood-color="#000" flood-opacity=".4"/></filter>
          <linearGradient id="shaft" x1="0" y1="0" x2="0" y2="1"><stop offset="0" stop-color="#ffcccc"/><stop offset=".2" stop-color="#ff3c3c"/><stop offset=".5" stop-color="#f00000"/></linearGradient>
        </defs>
        <path d="M848 205 851 205 877.500 326 884 323 878.500 345 866 329 872 327.500Z" fill="url(#shaft)" stroke="#f4dcdc" stroke-width=".6" filter="url(#soft)"/>
        <rect x="754" y="353" width="319" height="26" rx="13" fill="none" stroke="#8a8080" stroke-width="4" opacity=".35"/>
        <rect x="754" y="352" width="319" height="26" rx="13" fill="none" stroke="#f00000" stroke-width="3" stroke-dasharray="3 3"/>
        <path d="M900 363V381L904 377 907 384 910 383 907 376 912 376Z" fill="#fff" stroke="#222" stroke-width="1"/>
      </svg>`;
  }
}

customElements.define('app-icon', AppIcon);
customElements.define('dock-bar', DockBar);
customElements.define('side-dock', SideDock);
customElements.define('desktop-info', DesktopInfo);
customElements.define('note-bubble', NoteBubble);
customElements.define('setup-window', SetupWindow);
customElements.define('combo-box', ComboBox);
customElements.define('push-btn', PushBtn);
customElements.define('drive-group', DriveGroup);
customElements.define('options-group', OptionsGroup);
customElements.define('status-group', StatusGroup);
customElements.define('ctx-menu', CtxMenu);
customElements.define('menu-item', MenuItem);
customElements.define('menu-sep', MenuSep);
customElements.define('mark-up', MarkUp);
</script>
</body>
</html>
